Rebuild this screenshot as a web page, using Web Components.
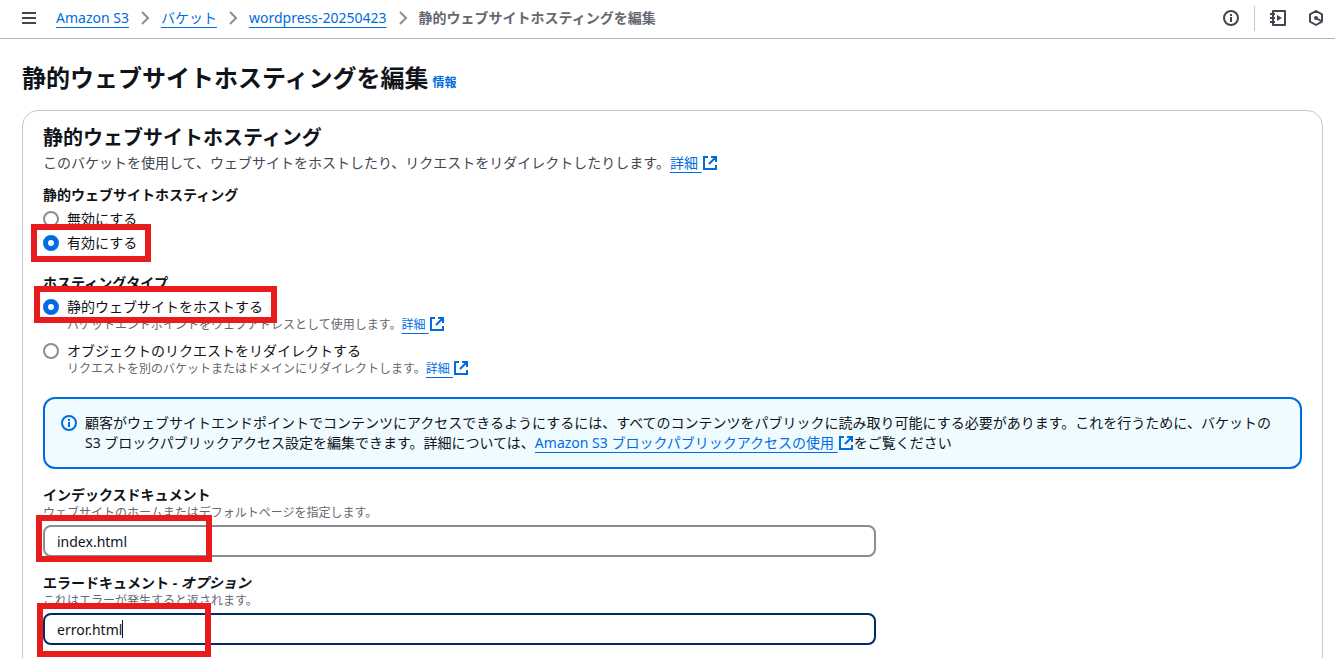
<!DOCTYPE html>
<html lang="ja">
<head>
<meta charset="utf-8">
<meta name="viewport" content="width=device-width, initial-scale=1">
<title>静的ウェブサイトホスティングを編集</title>
<style>
  body {
    margin: 0;
    background: #fff;
    color: #0f141a;
    font: 14px/20px "Noto Sans", "Noto Sans CJK JP", sans-serif;
  }
</style>
</head>
<body>
<s3-page></s3-page>

<script>
const define = (name, html, setup) => {
  const template = document.createElement("template");
  template.innerHTML = html.trim();
  customElements.define(name, class extends HTMLElement {
    constructor() {
      super();
      this.attachShadow({ mode: "open" }).append(template.content.cloneNode(true));
    }
    connectedCallback() { if (setup) setup(this, this.shadowRoot); }
  });
};

const icons = {
  menu: '<path d="M1 3h14M1 8h14M1 13h14"/>',
  chevron: '<path d="m5 2 6 6-6 6"/>',
  info: '<circle cx="8" cy="8" r="7"/><path d="M8 7v5M8 4v2"/>',
  external: '<path d="M6 2H2v12h12v-4M9 2h5v5M14 2 7 9"/>',
  tutorial: '<path d="M3 3V1h12v14H3v-2M3 5v2M3 9v2" stroke-linejoin="round"/><path d="M0 4h5M0 8h5M0 12h5"/><path d="m7 5 5 3-5 3Z" fill="currentColor" stroke="none"/>',
  hexagon: '<path d="m8 1 6 3.4v7.2L8 15l-6-3.400V4.400Z" stroke-linejoin="round"/><circle cx="8" cy="8" r="2" fill="currentColor" stroke="none"/><path d="m8 8 5 3"/>'
};
define("s3-icon", `
  <style>
    :host { display: inline-block; width: 16px; height: 16px; flex: none; }
    svg { display: block; width: 100%; height: 100%; fill: none; stroke: currentColor; stroke-width: 2; }
  </style>
  <svg viewBox="0 0 16 16" aria-hidden="true"></svg>`,
  (el, root) => { root.querySelector("svg").innerHTML = icons[el.getAttribute("name")]; });

define("s3-link", `
  <style>
    :host { color: #006ce0; }
    a { color: inherit; text-decoration: underline 1px; text-underline-offset: 4px; text-decoration-skip-ink: none; }
    :host([plain]) a { text-decoration: none; }
    s3-icon { display: none; vertical-align: 1px; margin: -4px 0; }
    :host([external]) s3-icon { display: inline-block; }
  </style><a href="#"><slot></slot></a><s3-icon name="external"></s3-icon>`);

/* Red marker drawn over a control; geometry comes from custom properties. */
define("mark-frame", `
  <style>
    :host {
      position: absolute; box-sizing: border-box; pointer-events: none; z-index: 1;
      left: var(--x); top: var(--y); width: var(--w); height: var(--h);
      border: 6px solid #e81c1c;
    }
  </style>`);

define("s3-topbar", `
  <style>
    :host { display: block; border-bottom: 1px solid #b4b4bb; }
    header {
      display: flex; align-items: center; justify-content: space-between;
      box-sizing: border-box; height: 38px; padding: 0 10px 2px 20px;
    }
    nav, ol, .tools { display: flex; align-items: center; }
    nav { gap: 18px; }
    ol { list-style: none; margin: 0; padding: 0; }
    li { display: flex; align-items: center; line-height: 20px; }
    li s3-icon { margin: 0 8px; color: #8c8c94; }
    li[aria-current] { color: #656871; font-weight: 700; }
    button { display: flex; padding: 1px; border: 0; background: none; color: #424650; }
    .tools { gap: 20px; }
    .divider { height: 25px; border-left: 1px solid #c6c6cd; margin: 0 -6px; }
  </style>
  <header>
    <nav aria-label="パンくずリスト">
      <button aria-label="メニュー"><s3-icon name="menu"></s3-icon></button>
      <ol>
        <li><s3-link>Amazon S3</s3-link><s3-icon name="chevron"></s3-icon></li>
        <li><s3-link>バケット</s3-link><s3-icon name="chevron"></s3-icon></li>
        <li><s3-link>wordpress-20250423</s3-link><s3-icon name="chevron"></s3-icon></li>
        <li aria-current="page">静的ウェブサイトホスティングを編集</li>
      </ol>
    </nav>
    <div class="tools">
      <button aria-label="情報"><s3-icon name="info"></s3-icon></button>
      <span class="divider"></span>
      <button aria-label="チュートリアル"><s3-icon name="tutorial"></s3-icon></button>
      <button aria-label="アシスタント"><s3-icon name="hexagon"></s3-icon></button>
    </div>
  </header>`);

define("s3-card", `
  <style>
    :host { display: block; border: 1px solid #c6c6cd; border-radius: 16px; padding: 15px 20px 40px; }
    h2 { margin: 0 0 3px; font-size: 20px; line-height: 24px; }
    p { margin: 0 0 12px; color: #424650; }
  </style>
  <h2><slot name="title"></slot></h2>
  <p><slot name="description"></slot></p>
  <slot></slot>`);

define("radio-group", `
  <style>
    :host { display: block; margin-bottom: 20px; }
    fieldset { margin: 0; padding: 0; border: 0; min-width: 0; }
    legend { padding: 0; margin-bottom: 4px; font-weight: 700; }
    div { display: grid; gap: var(--option-gap, 4px); }
  </style>
  <fieldset><legend><slot name="legend"></slot></legend><div><slot></slot></div></fieldset>`);

define("radio-option", `
  <style>
    :host { display: block; position: relative; }
    label { display: flex; align-items: center; gap: 8px; width: fit-content; }
    input {
      appearance: none; box-sizing: border-box; flex: none; width: 16px; height: 16px; margin: 0;
      border: 2px solid #8c8c94; border-radius: 50%; background: #fff;
    }
    input:checked { border: 5px solid #006ce0; }
    .hint { padding-left: 24px; font-size: 12px; line-height: 16px; color: #656871; }
  </style>
  <label><input type="radio"><span><slot></slot></span></label>
  <div class="hint"><slot name="hint"></slot></div>
  <slot name="mark"></slot>`,
  (el, root) => {
    const input = root.querySelector("input");
    input.name = el.getAttribute("group");
    input.checked = el.hasAttribute("checked");
  });

define("info-alert", `
  <style>
    :host {
      display: flex; gap: 8px; margin-bottom: 16px; padding: 14px 16px;
      border: 2px solid #006ce0; border-radius: 12px; background: #f0fbff;
    }
    s3-icon { color: #006ce0; margin-top: 2px; }
  </style>
  <s3-icon name="info"></s3-icon><div><slot></slot></div>`);

define("text-field", `
  <style>
    :host { display: grid; grid-template-columns: 2fr 1fr; column-gap: 10px; margin-bottom: 16px; }
    label { display: block; font-weight: 700; }
    p { margin: 0 0 4px; font-size: 12px; line-height: 16px; color: #656871; }
    .box { position: relative; }
    input {
      display: block; box-sizing: border-box; width: 100%; height: 32px; padding: 0 12px;
      border: 2px solid #8c8c94; border-radius: 8px; background: #fff; color: inherit; font: inherit; outline: 0;
    }
    .caret { display: none; position: absolute; left: 79px; top: 7px; width: 1px; height: 18px; background: #0f141a; }
    :host([editing]) input { border-color: #002b66; }
    :host([editing]) .caret { display: block; }
  </style>
  <div>
    <label for="field"><slot name="label"></slot></label>
    <p><slot name="hint"></slot></p>
    <div class="box"><input id="field" type="text"><span class="caret"></span><slot name="mark"></slot></div>
  </div>`,
  (el, root) => { root.querySelector("input").value = el.getAttribute("value"); });

define("s3-page", `
  <style>
    :host { display: block; height: 100vh; overflow: hidden; }
    main { padding: 24px 12px 24px 22px; }
    .heading { display: flex; align-items: baseline; gap: 4px; margin-bottom: 17px; }
    h1 { margin: 0; font-size: 24px; line-height: 30px; }
    .heading s3-link { font-size: 12px; line-height: 16px; font-weight: 700; }
    .types { --option-gap: 8px; }
    .enable-mark { --x: -12px; --y: -9px; --w: 120px; --h: 38px; }
    .type-mark { --x: -9px; --y: -11px; --w: 243px; --h: 37px; }
    .index-mark { --x: -7px; --y: -10px; --w: 176px; --h: 47px; }
    .error-mark { --x: -6px; --y: -10px; --w: 174px; --h: 54px; }
  </style>
  <s3-topbar></s3-topbar>
  <main>
    <div class="heading"><h1>静的ウェブサイトホスティングを編集</h1><s3-link plain>情報</s3-link></div>
    <s3-card>
      <span slot="title">静的ウェブサイトホスティング</span>
      <span slot="description">このバケットを使用して、ウェブサイトをホストしたり、リクエストをリダイレクトしたりします。<s3-link external>詳細&nbsp;</s3-link></span>

      <radio-group>
        <span slot="legend">静的ウェブサイトホスティング</span>
        <radio-option group="hosting">無効にする</radio-option>
        <radio-option group="hosting" checked>有効にする<mark-frame slot="mark" class="enable-mark"></mark-frame></radio-option>
      </radio-group>

      <radio-group class="types">
        <span slot="legend">ホスティングタイプ</span>
        <radio-option group="type" checked>静的ウェブサイトをホストする<span slot="hint">バケットエンドポイントをウェブアドレスとして使用します。<s3-link external>詳細&nbsp;</s3-link></span><mark-frame slot="mark" class="type-mark"></mark-frame></radio-option>
        <radio-option group="type">オブジェクトのリクエストをリダイレクトする<span slot="hint">リクエストを別のバケットまたはドメインにリダイレクトします。<s3-link external>詳細&nbsp;</s3-link></span></radio-option>
      </radio-group>

      <info-alert>顧客がウェブサイトエンドポイントでコンテンツにアクセスできるようにするには、すべてのコンテンツをパブリックに読み取り可能にする必要があります。これを行うために、バケットの S3 ブロックパブリックアクセス設定を編集できます。詳細については、<s3-link external>Amazon S3 ブロックパブリックアクセスの使用&nbsp;</s3-link>をご覧ください</info-alert>

      <text-field value="index.html">
        <span slot="label">インデックスドキュメント</span>
        <span slot="hint">ウェブサイトのホームまたはデフォルトページを指定します。</span>
        <mark-frame slot="mark" class="index-mark"></mark-frame>
      </text-field>
      <text-field value="error.html" editing>
        <span slot="label">エラードキュメント <i>- オプション</i></span>
        <span slot="hint">これはエラーが発生すると返されます。</span>
        <mark-frame slot="mark" class="error-mark"></mark-frame>
      </text-field>
    </s3-card>
  </main>`);
</script>
</body>
</html>
